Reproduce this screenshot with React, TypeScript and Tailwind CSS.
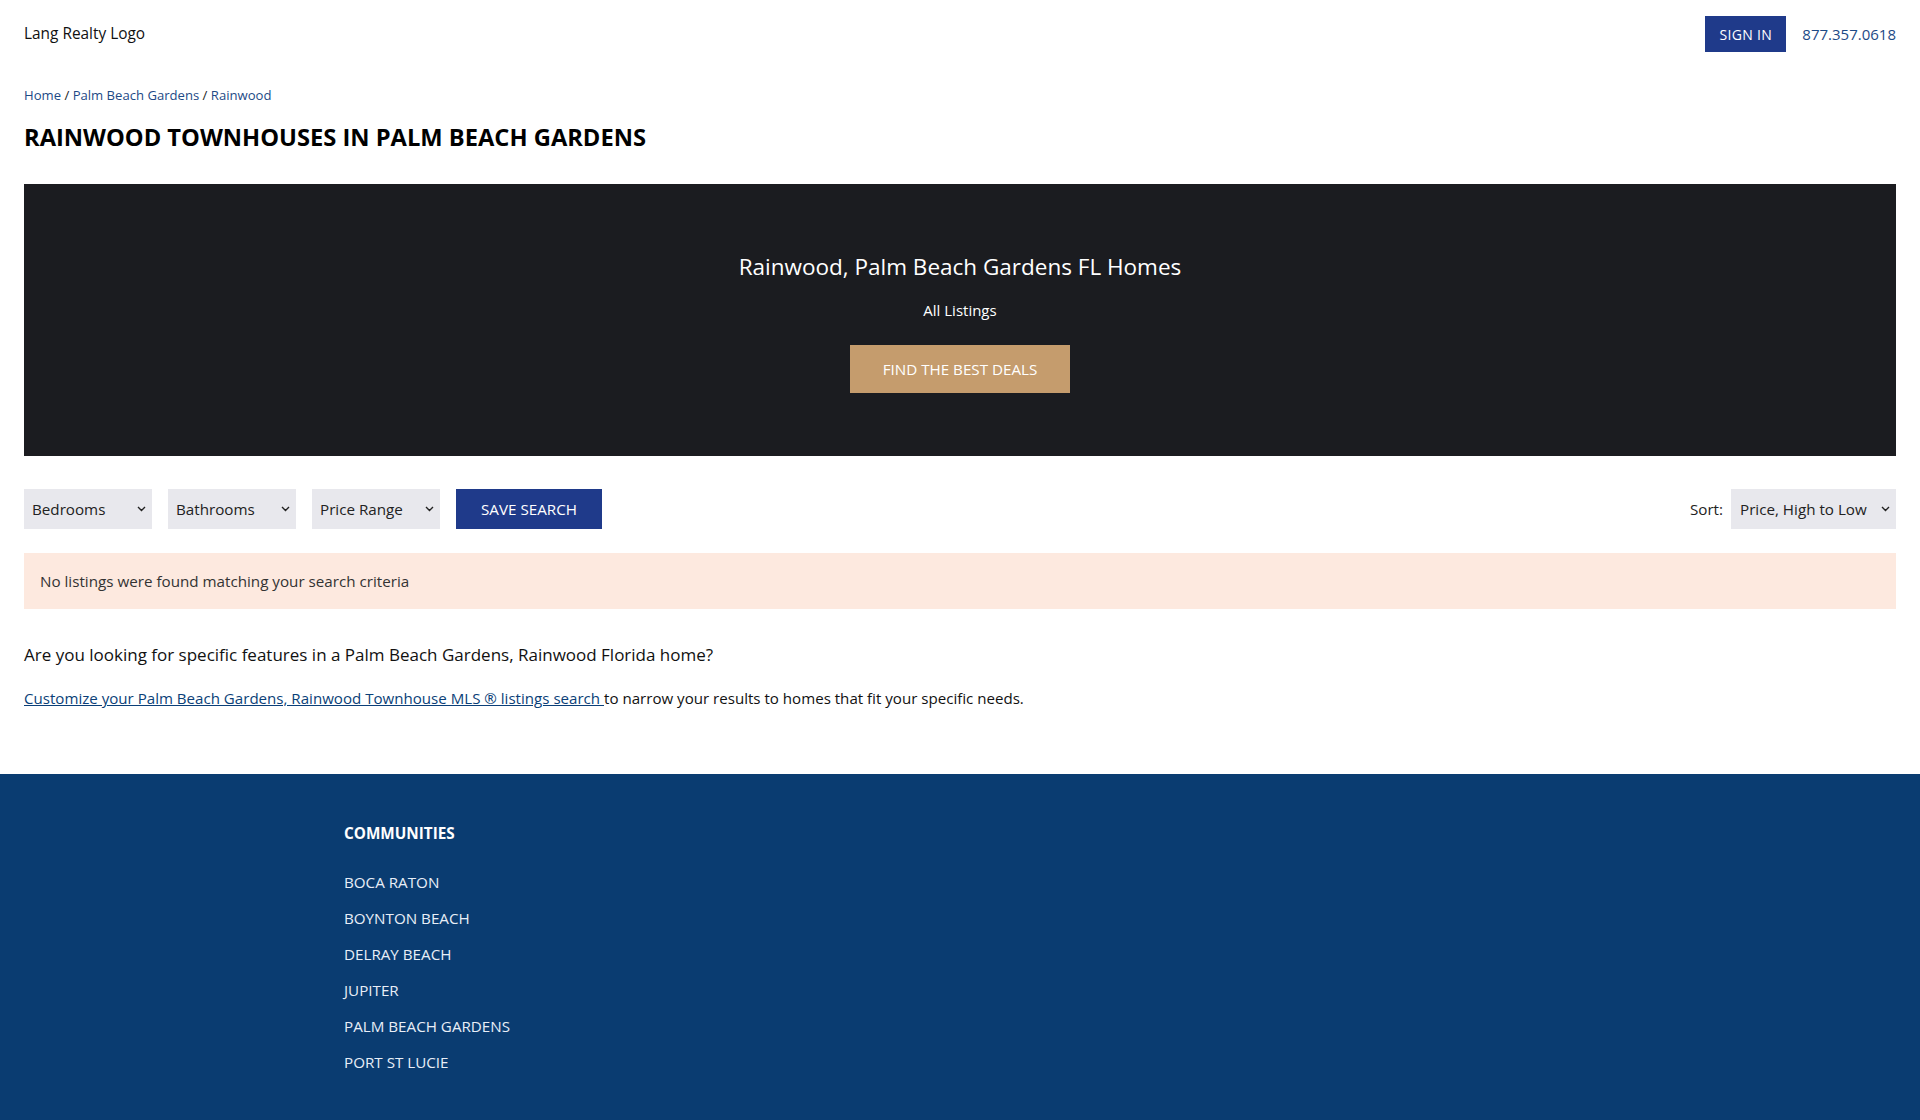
import React from "react";

const font = { fontFamily: '"Segoe UI", "Open Sans", "Noto Sans", sans-serif' };

function Chevron() {
  return (
    <svg width="9" height="6" viewBox="0 0 9 6" className="shrink-0">
      <path d="M1 1 L4.5 4.5 L8 1" fill="none" stroke="#222" strokeWidth="1.4" />
    </svg>
  );
}

function Select({ label, w }: { label: string; w: string }) {
  return (
    <div className={`${w} h-10 bg-[#e8e8ed] flex items-center justify-between pl-2 pr-[6px] text-[15.2px] text-[#222]`}>
      <span>{label}</span>
      <Chevron />
    </div>
  );
}

export default function App() {
  const communities = [
    "BOCA RATON",
    "BOYNTON BEACH",
    "DELRAY BEACH",
    "JUPITER",
    "PALM BEACH GARDENS",
    "PORT ST LUCIE",
  ];
  return (
    <div className="min-h-[1120px] bg-white text-black flex flex-col" style={font}>
      <header className="flex items-center justify-between pl-6 pr-6 pt-4">
        <div className="text-[15.4px] text-[#111]">Lang Realty Logo</div>
        <div className="flex items-center gap-[16px]">
          <button className="h-9 w-[81px] bg-[#1f3a8a] text-white text-[14px] tracking-wide">SIGN IN</button>
          <a className="text-[15px] text-[#1d4a86]">877.357.0618</a>
        </div>
      </header>

      <main className="px-6">
        <nav className="mt-[33px] text-[13.1px] leading-5 text-[#222]">
          <a className="text-[#1d4a86]">Home</a> / <a className="text-[#1d4a86]">Palm Beach Gardens</a> /{" "}
          <a className="text-[#1d4a86]">Rainwood</a>
        </nav>
        <h1 className="mt-4 text-[23.7px] leading-8 font-bold">RAINWOOD TOWNHOUSES IN PALM BEACH GARDENS</h1>

        <section className="mt-[31px] h-[272px] bg-[#1b1c20] flex flex-col items-center pt-[67px]">
          <h2 className="text-[22.5px] leading-8 text-white">Rainwood, Palm Beach Gardens FL Homes</h2>
          <p className="mt-[15px] text-[15px] leading-6 text-white">All Listings</p>
          <button className="mt-[23px] h-12 w-[220px] bg-[#c59c6d] text-white text-[15.2px]">FIND THE BEST DEALS</button>
        </section>

        <div className="mt-[33px] flex items-center justify-between">
          <div className="flex items-center gap-4">
            <Select label="Bedrooms" w="w-[128px]" />
            <Select label="Bathrooms" w="w-[128px]" />
            <Select label="Price Range" w="w-[128px]" />
            <button className="h-10 w-[146px] bg-[#1f3a8a] text-white text-[15.2px]">SAVE SEARCH</button>
          </div>
          <div className="flex items-center gap-2 text-[15.2px] text-[#222]">
            <span>Sort:</span>
            <div className="w-[165px] h-10 bg-[#e8e8ed] flex items-center justify-between pl-[9px] pr-[6px]">
              <span>Price, High to Low</span>
              <Chevron />
            </div>
          </div>
        </div>

        <div className="mt-6 bg-[#fde9df] px-4 py-4 text-[15.2px] leading-6 text-[#333]">
          No listings were found matching your search criteria
        </div>

        <p className="mt-8 text-[17px] leading-7 text-[#111]">
          Are you looking for specific features in a Palm Beach Gardens, Rainwood Florida home?
        </p>
        <p className="mt-[17px] text-[15.1px] leading-6 text-[#111]">
          <a className="text-[#0b3f78] underline">Customize your Palm Beach Gardens, Rainwood Townhouse MLS ® listings search </a>
          to narrow your results to homes that fit your specific needs.
        </p>
      </main>

      <footer className="mt-[64px] flex-1 bg-[#0a3c71]">
        <div className="mx-auto w-[1232px] pt-[48px] pb-12">
          <h3 className="text-[15.3px] leading-[22px] font-bold text-white">COMMUNITIES</h3>
          <ul className="mt-[26px] flex flex-col gap-3">
            {communities.map((c) => (
              <li key={c} className="text-[15.2px] leading-6 text-[#e8eef7]">
                {c}
              </li>
            ))}
          </ul>
        </div>
      </footer>
    </div>
  );
}
